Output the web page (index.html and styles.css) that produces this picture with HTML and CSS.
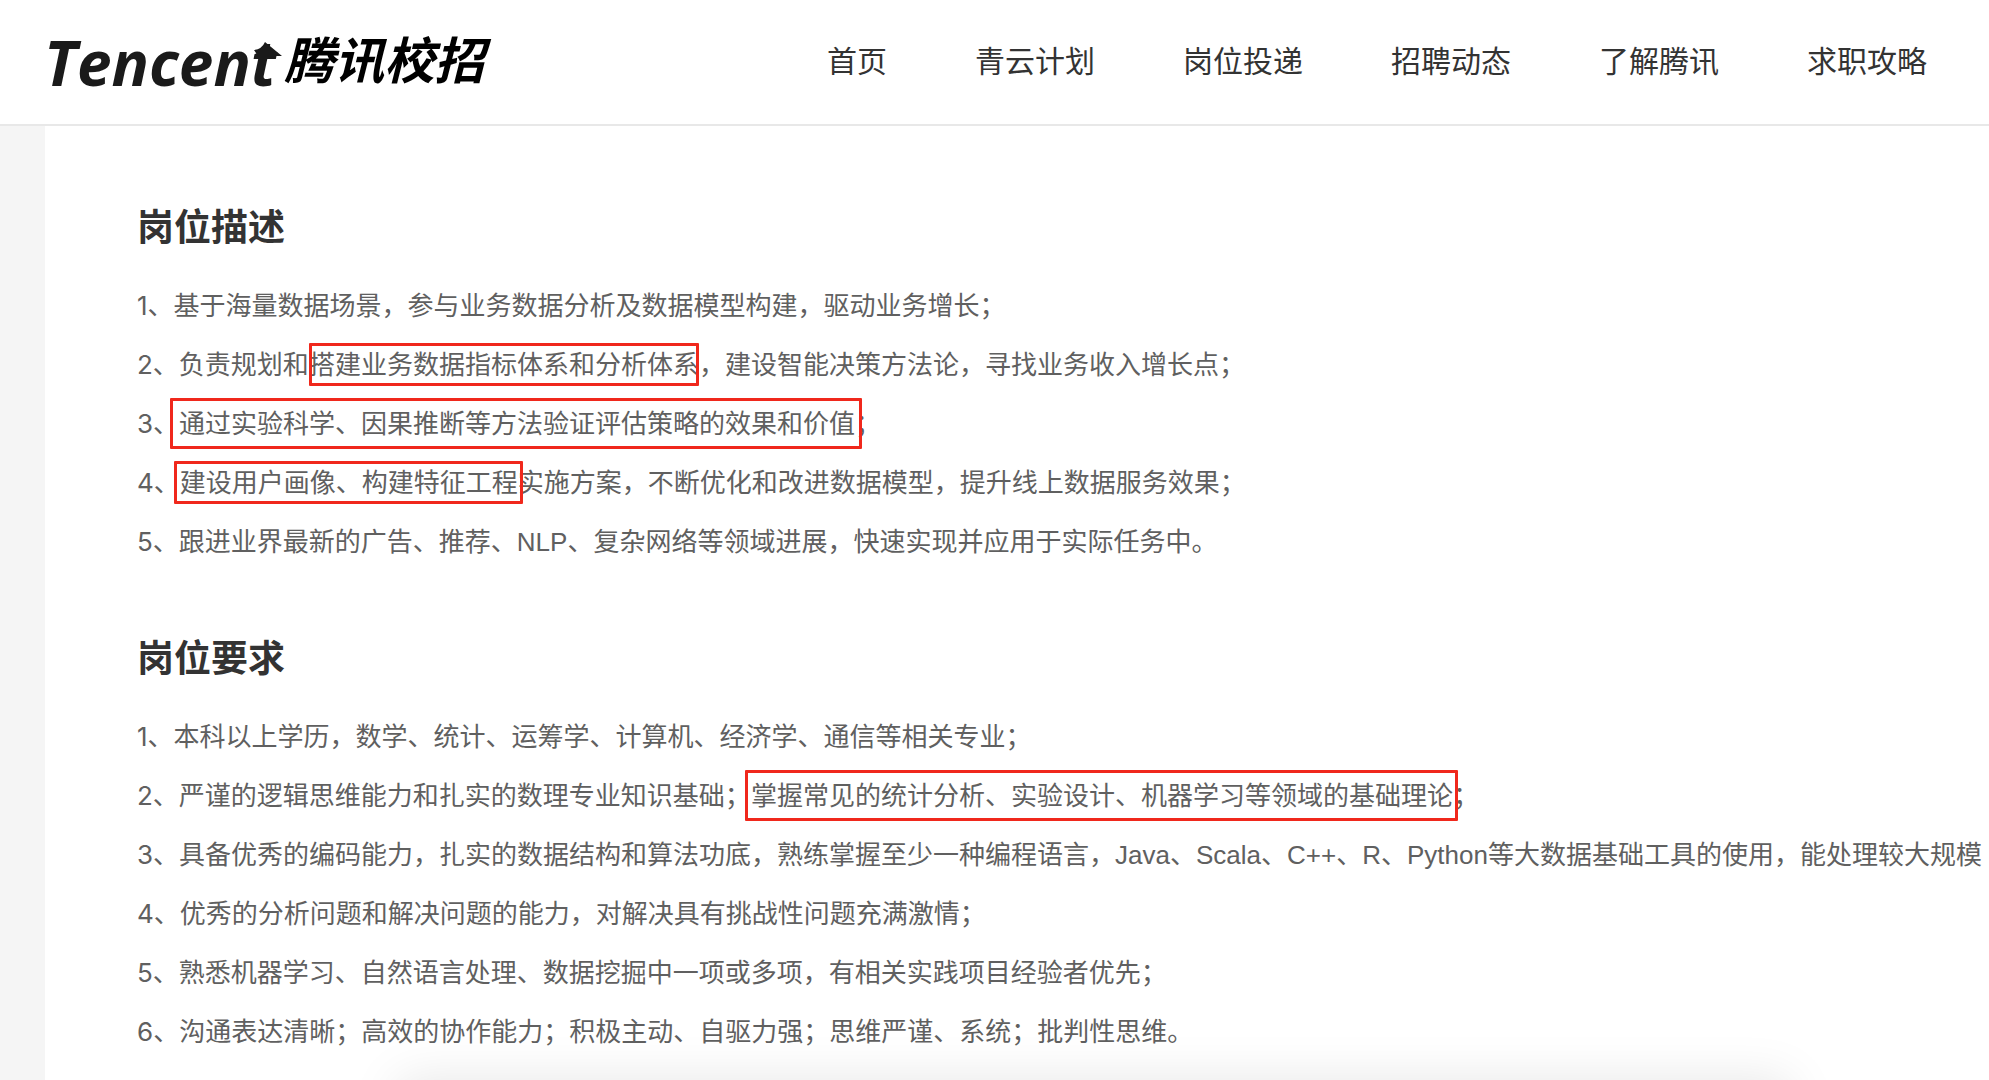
FILE: index.html
```html
<!DOCTYPE html>
<html lang="zh-CN">
<head>
    <meta charset="UTF-8">
    <meta name="viewport" content="width=device-width, initial-scale=1.0">
    <title>腾讯校招</title>
    <link rel="stylesheet" href="styles.css">
</head>
<body>
    <header class="header">
        <a class="logo" href="#">
            <span class="logo-en">Tencent<svg class="logo-arrow" viewBox="0 0 28 14" aria-hidden="true"><path d="M0 8 Q8 7 11 0 L28 14 H4 Z"/></svg></span>
            <span class="logo-cn">腾讯校招</span>
        </a>
        <nav class="nav">
            <a href="#">首页</a>
            <a href="#">青云计划</a>
            <a href="#">岗位投递</a>
            <a href="#">招聘动态</a>
            <a href="#">了解腾讯</a>
            <a href="#">求职攻略</a>
        </nav>
    </header>

    <main class="content">
        <section class="section">
            <h2>岗位描述</h2>
            <ul class="list">
                <li><span class="num">1</span>、基于海量数据场景，参与业务数据分析及数据模型构建，驱动业务增长；</li>
                <li><span class="num">2</span>、负责规划和<span class="mark">搭建业务数据指标体系和分析体系</span>，建设智能决策方法论，寻找业务收入增长点；</li>
                <li><span class="num">3</span>、<span class="mark mark-tall mark-wide">通过实验科学、因果推断等方法验证评估策略的效果和价值</span>；</li>
                <li><span class="num">4</span>、<span class="mark mark-pad">建设用户画像、构建特征工程</span>实施方案，不断优化和改进数据模型，提升线上数据服务效果；</li>
                <li><span class="num">5</span>、跟进业界最新的广告、推荐、NLP、复杂网络等领域进展，快速实现并应用于实际任务中。</li>
            </ul>
        </section>

        <section class="section">
            <h2>岗位要求</h2>
            <ul class="list">
                <li><span class="num">1</span>、本科以上学历，数学、统计、运筹学、计算机、经济学、通信等相关专业；</li>
                <li><span class="num">2</span>、严谨的逻辑思维能力和扎实的数理专业知识基础；<span class="mark mark-tall mark-pad">掌握常见的统计分析、实验设计、机器学习等领域的基础理论</span>；</li>
                <li><span class="num">3</span>、具备优秀的编码能力，扎实的数据结构和算法功底，熟练掌握至少一种编程语言，Java、Scala、C++、R、Python等大数据基础工具的使用，能处理较大规模</li>
                <li><span class="num">4</span>、优秀的分析问题和解决问题的能力，对解决具有挑战性问题充满激情；</li>
                <li><span class="num">5</span>、熟悉机器学习、自然语言处理、数据挖掘中一项或多项，有相关实践项目经验者优先；</li>
                <li><span class="num">6</span>、沟通表达清晰；高效的协作能力；积极主动、自驱力强；思维严谨、系统；批判性思维。</li>
            </ul>
        </section>
    </main>

    <div class="bottom-bar"></div>
</body>
</html>
```

FILE: styles.css
```css
* {
    box-sizing: border-box;
}
body {
    margin: 0;
    min-height: 100vh;
    display: flex;
    flex-direction: column;
    overflow: hidden;
    background: #f5f5f5;
    color: #333;
    font-family: "Liberation Sans", "Noto Sans CJK SC", sans-serif;
}
a {
    color: inherit;
    text-decoration: none;
}

/* header */
.header {
    display: flex;
    align-items: center;
    justify-content: space-between;
    height: 126px;
    padding: 0 62px 0 44px;
    background: #fff;
    border-bottom: 2px solid #e8e8e8;
}
.logo {
    display: flex;
    align-items: center;
    gap: 8px;
    line-height: 60px;
    white-space: nowrap;
}
.logo-en {
    position: relative;
    font-family: "Open Sans", sans-serif;
    font-size: 62px;
    font-weight: 700;
    font-style: italic;
    color: #1a1a1a;
}
.logo-arrow {
    position: absolute;
    top: 10px;
    right: -6px;
    width: 28px;
    height: 14px;
    fill: #1a1a1a;
}
.logo-cn {
    font-size: 50px;
    font-weight: 700;
    font-style: italic;
    color: #000;
}
.nav {
    display: flex;
    gap: 88px;
    font-size: 30px;
    line-height: 44px;
    white-space: nowrap;
}

/* job detail */
.content {
    flex: 1;
    margin-left: 45px;
    padding: 73px 0 0 92px;
    background: #fff;
}
.section {
    margin-bottom: 58px;
}
.section h2 {
    margin: 0 0 18px;
    font-size: 37px;
    font-weight: 700;
    line-height: 60px;
}
.list {
    margin: 0;
    padding: 0;
    list-style: none;
    color: #606060;
    font-size: 26px;
    line-height: 59px;
    white-space: nowrap;
}
.num {
    font-family: Inter, sans-serif;
    line-height: 1;
}

/* red frame round the key phrases */
.mark {
    position: relative;
    display: inline-block;
    vertical-align: top;
}
.mark::after {
    content: "";
    position: absolute;
    inset: 7px 0 9px;
    border: 3px solid #f0281c;
    border-radius: 1px;
}
.mark-pad::after {
    left: -6px;
    right: -5px;
}
.mark-wide::after {
    left: -9px;
    right: -7px;
}
.mark-tall::after {
    top: 3px;
    bottom: 5px;
}

/* bar just under the fold, only its shadow shows */
.bottom-bar {
    position: fixed;
    top: 100%;
    left: 20%;
    right: 10%;
    height: 80px;
    box-shadow: 0 0 50px rgba(0, 0, 0, 0.1);
}
```
